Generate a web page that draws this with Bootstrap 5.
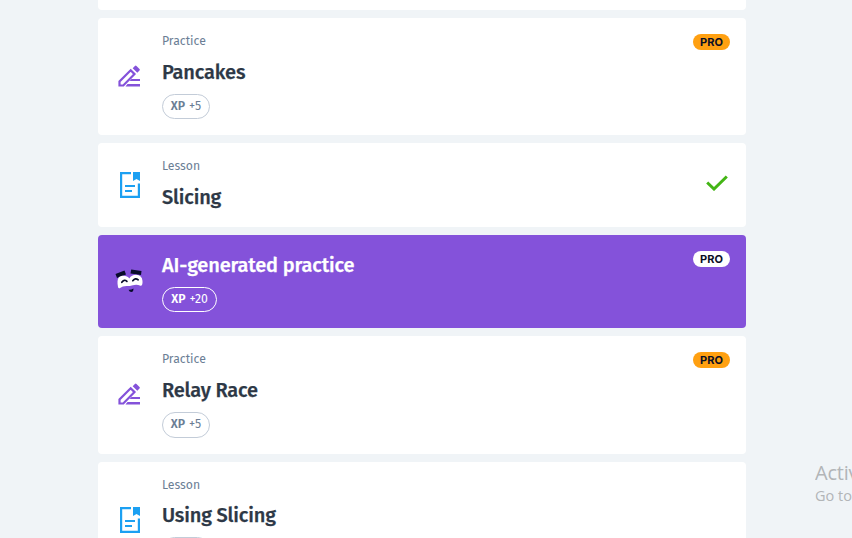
<!DOCTYPE html>
<html lang="en">
<head>
<meta charset="utf-8">
<meta name="viewport" content="width=device-width, initial-scale=1">
<title>Course lessons</title>
<link href="https://cdn.jsdelivr.net/npm/bootstrap@5.3.0/dist/css/bootstrap.min.css" rel="stylesheet">
<style>
body{background:#f0f4f7;font-family:"Fira Sans","Noto Sans",sans-serif;color:#2d3846;height:538px;overflow:hidden}
.course{width:648px;margin-left:98px}
.step{border:0;border-radius:4px;padding:16px;height:117px;flex-direction:row;flex-shrink:0}
.step-end{height:10px;padding:0}
.step-short{height:84px}
.step-ai{height:93px;background:#8452da;color:#fff}
.step-tall{height:118px}
.step-last{height:116px}
.glyph{width:32px;margin-right:16px;flex-shrink:0}
.kind{font-size:12.25px;line-height:15px;color:#6b7e95;margin-bottom:10px}
.title{font-size:20px;line-height:27px;font-weight:500;margin:0;white-space:nowrap;letter-spacing:-.16px;-webkit-text-stroke:.25px currentColor}
.step-ai .title{padding-top:1px;line-height:26px;line-height:27px}
.xp{width:48px;height:25px;margin-top:8px;border:1px solid #c3ccd8;border-radius:13px;color:#6b7e95;font-size:12.25px;line-height:23px}
.xp b{font-weight:600}
.step-ai .xp{width:55px;margin-top:8px;border-color:#fff;color:#fff}
.step-tall .xp{height:26px}
.step-last .kind{margin-bottom:9px}
.pro{width:37px;height:16px;background:#ffa011;color:#0a0f25;font:700 11px/17px Inter,sans-serif;padding:0}
.step-ai .pro{background:#fff}
.tick{margin:0 2px 5px 0}
.watermark{position:absolute;left:815px;top:460px;width:37px;overflow:hidden;color:#b2b5b7;font-family:"Open Sans",sans-serif;white-space:nowrap}
.wm-head{font-size:20px;line-height:26px;font-weight:400;letter-spacing:-.2px}
.wm-sub{font-size:14.5px;line-height:20px}
</style>
</head>
<body>
<svg class="d-none">
  <symbol id="pencil" viewBox="0.5 1.5 24 24"><path fill="none" stroke="#8452da" stroke-width="2.2" d="M2 22V18L13.2 6.8L17 10.6L5.8 22Z"/><path fill="#8452da" d="M15.2 4.7L17.4 2.5Q18.2 1.7 19 2.5L22 5.5Q22.8 6.3 22 7.1L19.8 9.3ZM14 15.5H22.5V17.5H12ZM10 20.5H22.5V23H8Z"/></symbol>
  <symbol id="page" viewBox="0 0 20 26"><path fill="none" stroke="#1ca0f2" stroke-width="2.2" d="M11 1.1H1.1V24.9H18.9V11.5M5 14H15M5 19H12"/><path fill="#1ca0f2" d="M13 0H20V9L16.5 7L13 9Z"/></symbol>
</svg>
<main class="course d-flex flex-column gap-2">
  <div class="card step step-end rounded-top-0"></div>
  <article class="card step">
    <div class="glyph d-flex align-items-center justify-content-center"><svg width="24" height="24"><use href="#pencil"/></svg></div>
    <div class="flex-grow-1"><div class="kind">Practice</div><h2 class="title">Pancakes</h2><div class="xp d-flex justify-content-center gap-1"><b>XP</b><span>+5</span></div></div>
    <span class="badge rounded-pill pro">PRO</span>
  </article>
  <article class="card step step-short">
    <div class="glyph d-flex align-items-center justify-content-center"><svg width="20" height="26"><use href="#page"/></svg></div>
    <div class="flex-grow-1"><div class="kind">Lesson</div><h2 class="title">Slicing</h2></div>
    <svg class="align-self-center tick" width="22" height="16" viewBox="0 0 22 16"><path d="M1.2 7.5L8 14L20.8 1.5" fill="none" stroke="#43b515" stroke-width="3"/></svg>
  </article>
  <article class="card step step-ai">
    <div class="glyph d-flex align-items-center justify-content-center"><svg width="30" height="28" viewBox="0.5 1 30 28"><g fill="#080b2b"><path d="M1 7L10 3.5L11.5 7.5L2.5 11Z"/><path d="M16.7 2.5L27 4L26.5 8L16 6.5Z"/></g><path fill="#fff" d="M3.5 20C1.8 10.5 5 8.8 9 8.8Q13 8.8 14.8 11.5Q17 7.8 21.5 7.8Q27.5 8 28 14Q28.3 19 26 18.7Q22 17 18.4 18.3L15.3 19.1Q8.2 18.3 6 20.7Q4 22 3.5 20Z"/><g fill="none" stroke="#080b2b" stroke-width="1.7" stroke-linecap="round"><path d="M7.3 15.3Q9.7 11.8 12.4 14.3M18.3 13.7Q20.8 10.4 23.7 12.8"/></g><path fill="#080b2b" d="M14 22.7Q16.5 23 19 21.5Q19 25 16.8 25Q15 25 14 22.7Z"/></svg></div>
    <div class="flex-grow-1"><h2 class="title">AI-generated practice</h2><div class="xp d-flex justify-content-center gap-1"><b>XP</b><span>+20</span></div></div>
    <span class="badge rounded-pill pro">PRO</span>
  </article>
  <article class="card step step-tall">
    <div class="glyph d-flex align-items-center justify-content-center"><svg width="24" height="24"><use href="#pencil"/></svg></div>
    <div class="flex-grow-1"><div class="kind">Practice</div><h2 class="title">Relay Race</h2><div class="xp d-flex justify-content-center gap-1"><b>XP</b><span>+5</span></div></div>
    <span class="badge rounded-pill pro">PRO</span>
  </article>
  <article class="card step step-last">
    <div class="glyph d-flex align-items-center justify-content-center"><svg width="20" height="26"><use href="#page"/></svg></div>
    <div class="flex-grow-1"><div class="kind">Lesson</div><h2 class="title">Using Slicing</h2><div class="xp d-flex justify-content-center gap-1"><b>XP</b><span>+5</span></div></div>
  </article>
</main>
<div class="watermark"><div class="wm-head">Activate Windows</div><div class="wm-sub">Go to Settings</div></div>
<script src="https://cdn.jsdelivr.net/npm/bootstrap@5.3.0/dist/js/bootstrap.bundle.min.js"></script>
</body>
</html>
